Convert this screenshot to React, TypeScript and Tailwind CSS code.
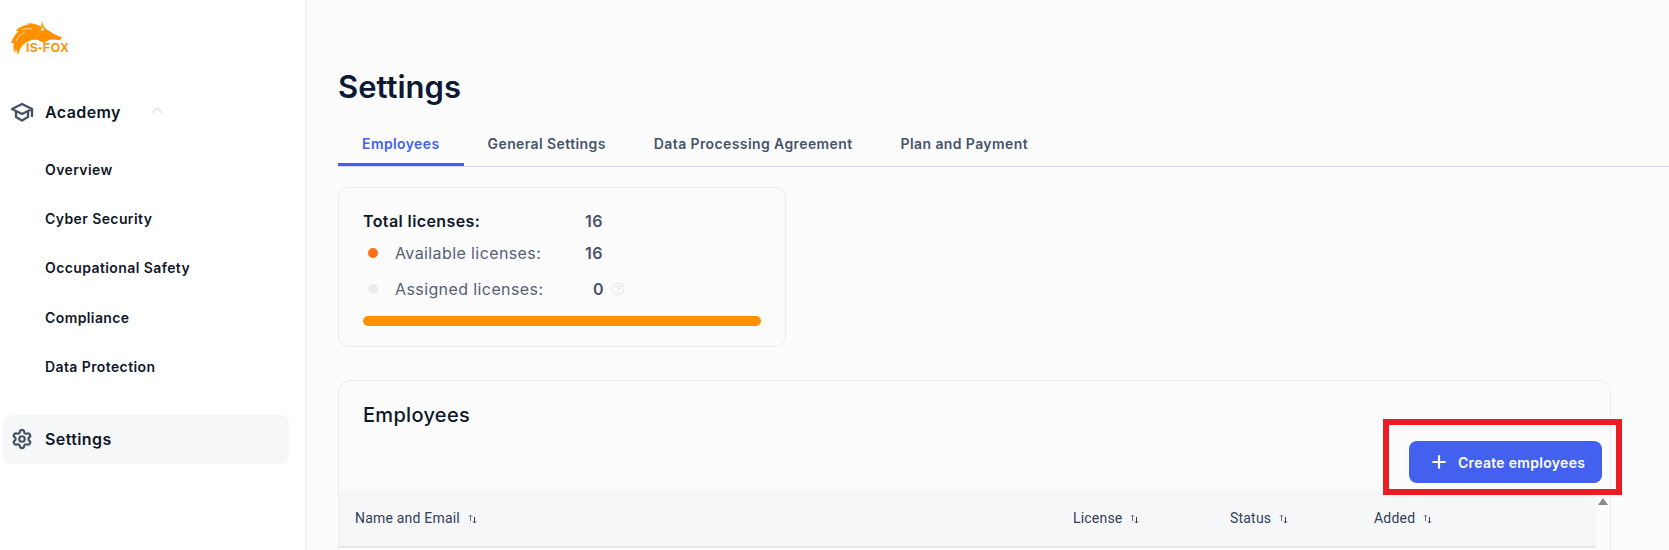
import React from 'react'
import { ChevronUp, CircleHelp, Plus, Settings as SettingsIcon } from 'lucide-react'

const academyLinks = ['Overview', 'Cyber Security', 'Occupational Safety', 'Compliance', 'Data Protection']
const tabs = ['Employees', 'General Settings', 'Data Processing Agreement', 'Plan and Payment']

const columns = [
  { label: 'Name and Email', width: 'w-[734px] pl-[16px]' },
  { label: 'License', width: 'w-[157px]' },
  { label: 'Status', width: 'w-[144px]' },
  { label: 'Added', width: 'w-[200px]' },
]

const SortIcon = () => (
  <svg width="9" height="10" viewBox="0 0 9 10" fill="none" stroke="#667085" strokeWidth="1" className="ml-[8px] mt-[2px]">
    <path d="M2.5 7V1M1 2.5 2.5 1 4 2.5" />
    <path d="M6.5 3v6M5 7.5 6.5 9 8 7.5" stroke="#344054" />
  </svg>
)

const CapIcon = () => (
  <svg width="24" height="20" viewBox="0 0 24 20" fill="none" stroke="#475467" strokeWidth="2.4" strokeLinejoin="round" strokeLinecap="round">
    <path d="M12 2 2 7l10 5 10-5-10-5Z" />
    <path d="M6 9.5V15l6 3.5 6-3.5V9.5" />
    <path d="M22 7v7" />
  </svg>
)

const Logo = () => (
  <div className="relative h-[60px] w-[75px]">
    <svg width="75" height="60" viewBox="0 0 75 60" className="absolute left-0 top-0">
      <path
        fill="#ff9100"
        d="M42 21C43 25 44 27 46 29L54 34 62 37.5 60 40 50 39.5 44 43 38 40C32 39 27 41 23 45 20 48 19 51 18 55L16 49 15 53C13 49 13 46 14 43L11 43C13 37 16 33 19 31L16 31C19 27 24 25 30 24L27 23C32 23 37 24 41 27Z"
      />
      <path fill="#fff" d="M42.5 26 44 30 41 31Z" />
      <path fill="none" stroke="#fff" strokeWidth="0.6" d="M16 41C18 37 21 34 25 32M21 30C24 29 28 28 32 29" />
    </svg>
    <span className="absolute left-[26px] top-[42px] text-[12px] leading-[13px] font-bold tracking-[0.5px] text-[#ff9100] font-['Liberation_Sans',sans-serif]">
      IS-FOX
    </span>
  </div>
)

const Sidebar = () => (
  <aside className="w-[307px] shrink-0 border-r-2 border-[#f0f1f3] bg-white">
    <Logo />
    <div className="mt-[40px] flex h-[24px] items-center pl-[10px]">
      <CapIcon />
      <span className="ml-[11px] text-[16px] font-semibold tracking-[0.4px] text-[#101828]">Academy</span>
      <ChevronUp size={18} strokeWidth={2.5} className="ml-[27px] -mt-[5px] text-[#e8ebef]" />
    </div>
    <ul className="mt-[21px]">
      {academyLinks.map((link) => (
        <li key={link} className="flex h-[49.2px] items-center pl-[45px]">
          <a href="#" className="text-[14px] font-semibold tracking-[0.4px] text-[#101828]">{link}</a>
        </li>
      ))}
    </ul>
    <div className="ml-[3px] mt-[24px] flex h-[49px] w-[286px] items-center rounded-lg bg-[#f6f7f9] pb-[1px] pl-[8px]">
      <SettingsIcon size={22} strokeWidth={2.4} className="text-[#475467]" />
      <span className="ml-[12px] text-[16px] font-semibold tracking-[0.4px] text-[#101828]">Settings</span>
    </div>
  </aside>
)

const LicenseCard = () => (
  <div className="mt-[20px] h-[160px] w-[448px] rounded-[10px] border border-[#eaecf0] pl-[24px] pt-[23px] text-[16px] tracking-[0.4px]">
    <div className="flex h-[20px] items-center">
      <span className="w-[222px] font-semibold text-[#101828]">Total licenses:</span>
      <span className="font-semibold text-[#475467]">16</span>
    </div>
    <div className="mt-[12px] flex h-[20px] items-center">
      <span className="ml-[5px] h-[10px] w-[10px] rounded-full bg-[#ff6f1a]" />
      <span className="ml-[17px] w-[190px] text-[#566073]">Available licenses:</span>
      <span className="font-semibold text-[#475467]">16</span>
    </div>
    <div className="mt-[16px] flex h-[20px] items-center">
      <span className="ml-[5px] h-[10px] w-[10px] rounded-full bg-[#eaecf0]" />
      <span className="ml-[17px] w-[198px] text-[#566073]">Assigned licenses:</span>
      <span className="font-semibold text-[#475467]">0</span>
      <CircleHelp size={14} strokeWidth={2.5} className="ml-[7px] text-[#e8ebef]" />
    </div>
    <div className="mt-[17px] h-[10px] w-[398px] rounded-full bg-[#ff9100]" />
  </div>
)

const EmployeesCard = () => (
  <div className="mt-[33px] flex h-[300px] w-[1273px] flex-col rounded-xl border border-[#eaecf0] pt-[20px]">
    <h2 className="pl-[24px] text-[20px] leading-[28px] font-medium tracking-[0.3px] text-[#101828]">Employees</h2>
    <button className="mr-[8px] mt-[12px] flex h-[42px] w-[193px] items-center self-end rounded-lg bg-[#4361ee] pl-[20px] text-[14px] font-semibold tracking-[0.3px] text-white">
      <Plus size={20} strokeWidth={2.6} />
      <span className="ml-[9px]">Create employees</span>
    </button>
    <div className="mt-[7px] flex h-[58px] w-[1257px] items-center border-b-2 border-[#e4e6e9] bg-[#f6f7f9] font-['Roboto',sans-serif] text-[14px] tracking-[0.2px] text-[#344054]">
      {columns.map((col) => (
        <div key={col.label} className={`flex items-center ${col.width}`}>
          {col.label}
          <SortIcon />
        </div>
      ))}
    </div>
  </div>
)

const App = () => {
  return (
    <div className="relative flex h-[550px] w-[1669px] overflow-hidden bg-[#fcfcfd] font-['Inter',sans-serif]">
      <Sidebar />
      <main className="min-w-0 flex-1 pl-[31px] pt-[67px]">
        <h1 className="text-[31px] leading-[40px] font-semibold text-[#0c1a33]">Settings</h1>
        <nav className="mt-[13px] flex border-b border-[#d3d3ee]">
          {tabs.map((tab, i) => (
            <a
              key={tab}
              href="#"
              className={`flex h-[46px] items-center border-b-[3px] px-[24px] pt-[3px] text-[14px] font-semibold tracking-[0.4px] ${
                i === 0 ? 'border-[#4361ee] text-[#4361ee]' : 'border-transparent text-[#475467]'
              }`}
            >
              {tab}
            </a>
          ))}
        </nav>
        <LicenseCard />
        <EmployeesCard />
      </main>
      {/* annotation box round the button */}
      <div className="absolute left-[1383px] top-[419px] h-[76px] w-[239px] border-[6px] border-[#ec1c24]" />
      {/* scrollbar arrow */}
      <div className="absolute left-[1598px] top-[498px] h-0 w-0 border-x-[5px] border-b-[7px] border-x-transparent border-b-[#8a8a8a]" />
    </div>
  )
}

export default App
